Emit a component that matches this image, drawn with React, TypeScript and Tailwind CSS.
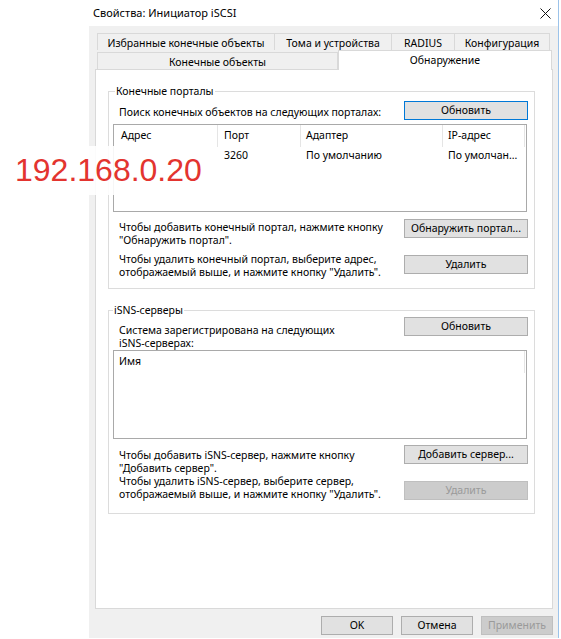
import React from 'react'

const font = "font-['Noto_Sans','Liberation_Sans',sans-serif]"

function Btn({
  label,
  focused,
  disabled,
  wide = true,
}: {
  label: string
  focused?: boolean
  disabled?: boolean
  wide?: boolean
}) {
  const base = 'flex h-[19px] shrink-0 items-center justify-center border text-[10.5px] leading-none'
  const width = wide ? 'w-[124px]' : 'w-[72px]'
  const look = disabled
    ? 'border-[#bfbfbf] bg-[#cccccc] text-[#9a9a9a]'
    : focused
      ? 'border-[#0078d7] bg-[#e1e1e1] text-black'
      : 'border-[#adadad] bg-[#e1e1e1] text-black'
  return (
    <button type="button" disabled={disabled} className={`${base} ${width} ${look}`}>
      {label}
    </button>
  )
}

function Tab({ label, width, first }: { label: string; width: string; first?: boolean }) {
  return (
    <div
      className={`${width} h-[17px] border-t border-r border-[#d9d9d9] bg-[#f0f0f0] pt-[3px] text-center text-[10.5px] leading-[13px] ${first ? 'border-l' : ''}`}
    >
      {label}
    </div>
  )
}

function HelpRow({ lines, button, textPad, btnPad }: { lines: string[]; button: React.ReactNode; textPad: string; btnPad: string }) {
  return (
    <div className="flex items-start justify-between pl-[10px] pr-[6px]">
      <div className={`${textPad} text-[10.5px] leading-[13px]`}>
        {lines.map((l) => (
          <div key={l} className="whitespace-nowrap">
            {l}
          </div>
        ))}
      </div>
      <div className={btnPad}>{button}</div>
    </div>
  )
}

export default function App() {
  return (
    <div className={`relative h-[639px] w-[561px] overflow-hidden bg-white text-black ${font}`}>
      <div className="ml-[89px] flex h-[638px] w-[470px] flex-col border-r border-[#9cc3ea]">
        {/* title bar */}
        <div className="flex h-[26px] items-center justify-between bg-white pl-[4px] pr-[7px]">
          <span className="text-[11px]">Свойства: Инициатор iSCSI</span>
          <svg width="11" height="11" viewBox="0 0 11 11">
            <path d="M0.5 0.5 L10.5 10.5 M10.5 0.5 L0.5 10.5" stroke="#111" strokeWidth="1" />
          </svg>
        </div>

        <div className="flex flex-1 flex-col bg-[#f0f0f0] pt-[7px]">
          {/* tabs */}
          <div className="ml-[8px] flex">
            <Tab label="Избранные конечные объекты" width="w-[178px]" first />
            <Tab label="Тома и устройства" width="w-[117px]" />
            <Tab label="RADIUS" width="w-[63px]" />
            <Tab label="Конфигурация" width="w-[95px]" />
          </div>
          <div className="ml-[8px] flex items-end">
            <Tab label="Конечные объекты" width="w-[241px]" first />
            <div className="relative z-10 -mb-px h-[20px] w-[214px] border-t border-r border-l border-[#d9d9d9] bg-white pt-[3px] text-center text-[10.5px] leading-[13px]">
              Обнаружение
            </div>
          </div>

          {/* tab page */}
          <div className="ml-[6px] flex h-[540px] w-[458px] flex-col border border-[#d9d9d9] bg-white">
            <fieldset className="mt-[15px] ml-[12px] w-[427px] border border-[#dcdcdc] pb-[9px]">
              <legend className="ml-[6px] px-[1px] text-[10.5px] leading-[13px]">Конечные порталы</legend>
              <HelpRow
                lines={['Поиск конечных объектов на следующих порталах:']}
                button={<Btn label="Обновить" focused />}
                textPad="pt-[8px]"
                btnPad="pt-[3px]"
              />
              <div className="mt-[4px] ml-[4px] h-[88px] w-[414px] border border-[#a9a9a9] text-[10.5px]">
                <div className="flex h-[22px]">
                  <div className="flex w-[104px] items-center border-r border-[#e5e5e5] pl-[7px]">Адрес</div>
                  <div className="flex w-[83px] items-center border-r border-[#e5e5e5] pl-[6px]">Порт</div>
                  <div className="flex w-[142px] items-center border-r border-[#e5e5e5] pl-[5px]">Адаптер</div>
                  <div className="flex w-[82px] items-center border-r border-[#e5e5e5] pl-[5px]">IP-адрес</div>
                </div>
                <div className="flex h-[18px] items-center">
                  <div className="w-[104px]" />
                  <div className="w-[83px] pl-[6px]">3260</div>
                  <div className="w-[142px] pl-[5px]">По умолчанию</div>
                  <div className="w-[82px] pl-[5px] whitespace-nowrap">По умолчан...</div>
                </div>
              </div>
              <div className="mt-[7px]">
                <HelpRow
                  lines={['Чтобы добавить конечный портал, нажмите кнопку', '"Обнаружить портал".']}
                  button={<Btn label="Обнаружить портал..." />}
                  textPad="pt-[2px]"
                  btnPad=""
                />
              </div>
              <div className="mt-[6px]">
                <HelpRow
                  lines={['Чтобы удалить конечный портал, выберите адрес,', 'отображаемый выше, и нажмите кнопку "Удалить".']}
                  button={<Btn label="Удалить" />}
                  textPad=""
                  btnPad="pt-[2px]"
                />
              </div>
            </fieldset>

            <fieldset className="mt-[15px] ml-[12px] w-[427px] border border-[#dcdcdc] pb-[12px]">
              <legend className="ml-[4px] px-[1px] text-[10.5px] leading-[13px]">iSNS-серверы</legend>
              <HelpRow
                lines={['Система зарегистрирована на следующих', 'iSNS-серверах:']}
                button={<Btn label="Обновить" />}
                textPad="pt-[7px]"
                btnPad=""
              />
              <div className="ml-[4px] h-[89px] w-[414px] border border-[#a9a9a9] text-[10.5px]">
                <div className="flex h-[22px]">
                  <div className="flex w-[411px] items-center border-r border-[#e5e5e5] pl-[5px]">Имя</div>
                </div>
              </div>
              <div className="mt-[6px]">
                <HelpRow
                  lines={['Чтобы добавить iSNS-сервер, нажмите кнопку', '"Добавить сервер".']}
                  button={<Btn label="Добавить сервер..." />}
                  textPad="pt-[4px]"
                  btnPad=""
                />
              </div>
              <HelpRow
                lines={['Чтобы удалить iSNS-сервер, выберите сервер,', 'отображаемый выше, и нажмите кнопку "Удалить".']}
                button={<Btn label="Удалить" disabled />}
                textPad=""
                btnPad="pt-[6px]"
              />
            </fieldset>
          </div>

          {/* dialog buttons */}
          <div className="mt-[7px] mr-[5px] flex justify-end gap-[8px]">
            <Btn label="OK" wide={false} />
            <Btn label="Отмена" wide={false} />
            <Btn label="Применить" wide={false} disabled />
          </div>
        </div>
      </div>

      {/* annotation pasted over the address */}
      <div className="absolute top-[146px] left-0 h-[49px] w-[191px] bg-white/90" />
      <div className="absolute top-[154px] left-[15px] font-['Liberation_Sans',Arial,sans-serif] text-[32px] leading-none text-[#e3342f]">
        192.168.0.20
      </div>
    </div>
  )
}
